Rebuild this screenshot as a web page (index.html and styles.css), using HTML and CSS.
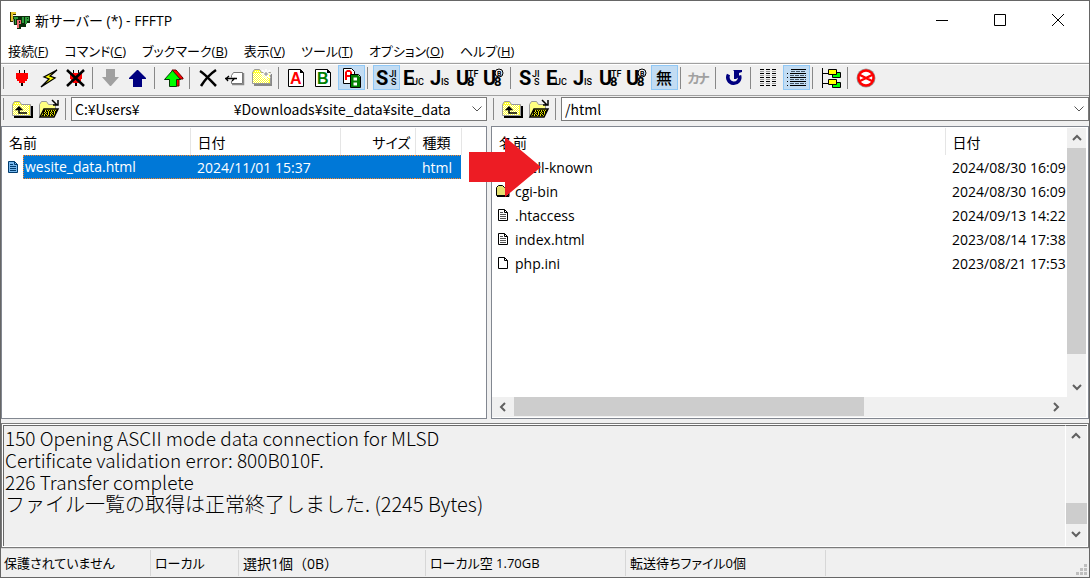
FILE: index.html
```html
<!DOCTYPE html>
<html lang="ja">
<head>
<meta charset="utf-8">
<meta name="viewport" content="width=device-width, initial-scale=1">
<title>新サーバー (*) - FFFTP</title>
<link rel="stylesheet" href="styles.css">
</head>
<body>
<svg class="defs" aria-hidden="true">
  <defs>
    <symbol id="plug" viewBox="0 0 27 25"><path d="M10 5h1v3h-1zM15 5h1v3h-1zM12 18h2v3h-2z" fill="#000"/><path d="M7 8h12v6h-1v2h-2v2h-6v-2h-2v-2h-1z" fill="#f00"/></symbol>
    <symbol id="folder-body" viewBox="0 0 27 25"><path d="M3.500 18.500v-11l2-3h5l2 3h9v11z" fill="#ffff2a" stroke="#999"/><path d="M5 8.500h16M5 10.500h16M5 12.500h16M5 14.500h16M5 16.500h16M6 6.500h5" stroke="#fff" stroke-dasharray="1 1"/><path d="M4 9.500h16M4 11.500h16M4 13.500h16M4 15.500h16M4 17.500h16" stroke="#fff" stroke-dasharray="1 1"/></symbol>
    <symbol id="up-folder" viewBox="0 0 27 25"><path d="M5 20h18V9" fill="none" stroke="#000" stroke-width="2"/><use href="#folder-body"/><path d="M10 11v5h8M7.500 12.500l2.500-2.500 2.500 2.500z" fill="none" stroke="#000" stroke-width="1.500"/></symbol>
    <symbol id="open-folder" viewBox="0 0 27 25"><path d="M3.500 19.500v-12l2-3h5l2 3h7v5" fill="#ffff80" stroke="#999"/><path d="M4 20l4-8h14l-4 8z" fill="#e0e000" stroke="#000" stroke-width="1.500"/><path d="M8 13.500h13M7 15.500h13M7 17.500h12" stroke="#000" stroke-dasharray="1 1"/><path d="M7 14.500h13M7 16.500h13M6 18.500h12" stroke="#000" stroke-dasharray="2 1"/><path d="M16 3l5 5M17 8h5V3" fill="none" stroke="#000" stroke-width="1.500"/></symbol>
    <symbol id="chev-up" viewBox="0 0 10 10"><path d="M1 7l4-4 4 4" fill="none" stroke="#606060" stroke-width="2"/></symbol>
    <symbol id="chev-down" viewBox="0 0 10 10"><path d="M1 3l4 4 4-4" fill="none" stroke="#606060" stroke-width="2"/></symbol>
    <symbol id="chev-left" viewBox="0 0 10 10"><path d="M7 1L3 5l4 4" fill="none" stroke="#606060" stroke-width="2"/></symbol>
    <symbol id="chev-right" viewBox="0 0 10 10"><path d="M3 1l4 4-4 4" fill="none" stroke="#606060" stroke-width="2"/></symbol>
    <symbol id="page" viewBox="0 0 12 12"><path d="M1.500.5h6l3 3v8h-9z" fill="#fff" stroke="#000"/><path d="M7.500.5v3h3" fill="none" stroke="#000"/></symbol>
    <symbol id="page-text" viewBox="0 0 12 12"><use href="#page"/><path d="M3 3.500h3M3 5.500h6M3 7.500h6M3 9.500h6" stroke="#555"/></symbol>
    <symbol id="page-selected" viewBox="0 0 12 12"><path d="M1.500.5h6l3 3v8h-9z" fill="#78b8ee" stroke="#003c6e"/><path d="M7.500.5v3h3M3 3.500h3M3 5.500h6M3 7.500h6M3 9.500h6" fill="none" stroke="#003c6e"/></symbol>
    <symbol id="folder" viewBox="0 0 14 12"><path d="M.5 10.500v-8l2-2h4l2 2h4v8z" fill="#e4e070" stroke="#000"/><path d="M13 3v8.500H1" fill="none" stroke="#000"/></symbol>
    <symbol id="sjis" viewBox="0 0 27 25"><text x="3" y="20" class="g-big">S</text><text x="16" y="12" class="g-small">JI</text><text x="18" y="20" class="g-small">S</text></symbol>
    <symbol id="euc" viewBox="0 0 27 25"><text x="3" y="20" class="g-big">E</text><text x="12" y="20" class="g-small">UC</text></symbol>
    <symbol id="jis" viewBox="0 0 27 25"><text x="3" y="20" class="g-big">J</text><text x="14" y="20" class="g-small">IS</text></symbol>
    <symbol id="utf8" viewBox="0 0 27 25"><text x="2" y="20" class="g-big">U</text><text x="14" y="12" class="g-small">TF</text><text x="13" y="21" class="g-eight">8</text></symbol>
    <symbol id="utf8b" viewBox="0 0 27 25"><text x="2" y="20" class="g-big">U</text><circle cx="18" cy="8" r="4" fill="none" stroke="#000"/><text x="16" y="11" class="g-bom">B</text><text x="13" y="21" class="g-eight">8</text></symbol>
  </defs>
</svg>

<main class="window">
  <header class="titlebar">
    <svg class="app-icon" viewBox="0 0 20 18" aria-hidden="true">
      <path d="M0 1h6v3H3v1h3v3H3v3H0z" fill="#332b00"/><path d="M1 1h5v2H3v2h2v2H3v3H1z" fill="#e5c62b"/>
      <path d="M3 5h17v7h-4v4h-5v2H7v-4H4z" fill="#0b2d0b"/>
      <path d="M4 6h4v2H6v5H5V8H4zM12 6h2v6h-2zM15 6h4v4h-2v3h-2z" fill="#2e9c3c"/>
      <path d="M7 9h4v4H9v4H7z" fill="#ee6b72"/><path d="M9 10h1v2H9zM17 7h1v1h-1z" fill="#102010"/>
    </svg>
    <h1 class="title">新サーバー (*) - FFFTP</h1>
    <div class="window-buttons">
      <button class="win-btn" type="button" aria-label="最小化"><svg viewBox="0 0 12 12"><path d="M0 6.500h12" stroke="#000"/></svg></button>
      <button class="win-btn" type="button" aria-label="最大化"><svg viewBox="0 0 12 12"><path d="M.5.5h11v11H.5z" fill="none" stroke="#000"/></svg></button>
      <button class="win-btn" type="button" aria-label="閉じる"><svg viewBox="0 0 12 12"><path d="M0 0l12 12M12 0L0 12" stroke="#000"/></svg></button>
    </div>
  </header>

  <nav class="menubar">
    <button type="button">接続(<u>F</u>)</button>
    <button type="button">コマンド(<u>C</u>)</button>
    <button type="button">ブックマーク(<u>B</u>)</button>
    <button type="button">表示(<u>V</u>)</button>
    <button type="button">ツール(<u>T</u>)</button>
    <button type="button">オプション(<u>O</u>)</button>
    <button type="button">ヘルプ(<u>H</u>)</button>
  </nav>

  <div class="toolbar" role="toolbar" aria-label="メインツールバー">
    <span class="sep"></span>
    <button class="tool" type="button" aria-label="接続"><svg><use href="#plug"/></svg></button>
    <button class="tool" type="button" aria-label="クイック接続"><svg viewBox="0 0 27 25"><path d="M21 5L8 12l5 2-8 8 14-9-5-2z" fill="#ff0" stroke="#000" stroke-width="1.300"/></svg></button>
    <button class="tool" type="button" aria-label="切断"><svg viewBox="0 0 27 25"><use href="#plug"/><path d="M4 5l17 16M21 5L4 21" stroke="#000" stroke-width="2.500"/></svg></button>
    <span class="sep"></span>
    <button class="tool" type="button" aria-label="ダウンロード"><svg viewBox="0 0 27 25"><path d="M8 4h9v8h4l-8 9h-1l-8-9h4z" fill="#a0a0a0"/></svg></button>
    <button class="tool" type="button" aria-label="アップロード"><svg viewBox="0 0 27 25"><path d="M8 22h9v-8h4v-1l-8-8h-1l-8 8v1h4z" fill="#000080"/></svg></button>
    <span class="sep"></span>
    <button class="tool" type="button" aria-label="ミラーリングアップロード"><svg viewBox="0 0 27 25"><path d="M12 5h4l7 8v1h-4v7h-3z" fill="#f00" stroke="#600"/><path d="M9.500 21.500v-7h-5l8-9 8 9h-4v7z" fill="#0f0" stroke="#063806"/></svg></button>
    <span class="sep"></span>
    <button class="tool" type="button" aria-label="削除"><svg viewBox="0 0 27 25"><path d="M5 6c5 3 10 9 16 15M21 5C15 9 11 13 6 21" fill="none" stroke="#000" stroke-width="2.500"/></svg></button>
    <button class="tool" type="button" aria-label="名前変更"><svg viewBox="0 0 27 25"><path d="M10 19.500h11.500V8" fill="none" stroke="#888" stroke-width="1.500"/><path d="M9.500 16v2.500h11v-11h-9l-2 3v2" fill="#fff" stroke="#777"/><path d="M3 13.500h12M7 11l-3 2.500 2 2.500M10 16l3-3" fill="none" stroke="#000" stroke-width="1.300"/></svg></button>
    <button class="tool" type="button" aria-label="フォルダ作成"><svg viewBox="0 0 27 25"><path d="M5 20h17V9" fill="none" stroke="#888" stroke-width="2"/><use href="#folder-body"/><path d="M17 4v10M12 9h10M13 5l8 8M21 5l-8 8" stroke="#fff" stroke-width="1.500"/><path d="M15 9h4M17 7v4" stroke="#888"/></svg></button>
    <span class="sep"></span>
    <button class="tool" type="button" aria-label="ASCIIモード"><svg viewBox="0 0 27 25"><path d="M4.500 4.500h12l3 3v14h-15z" fill="#fff" stroke="#000"/><path d="M16 4v4h4z" fill="#000"/><text x="6" y="19" class="g-mode g-red">A</text></svg></button>
    <button class="tool" type="button" aria-label="バイナリモード"><svg viewBox="0 0 27 25"><path d="M4.500 4.500h12l3 3v14h-15z" fill="#fff" stroke="#000"/><path d="M16 4v4h4z" fill="#000"/><text x="6" y="19" class="g-mode g-green">B</text></svg></button>
    <button class="tool pressed" type="button" aria-label="自動切替" aria-pressed="true"><svg viewBox="0 0 27 25"><path d="M5.500 3.500h8l3 3v12h-11z" fill="#fff" stroke="#000"/><path d="M7 15V7l2-2h3l2 2v8h-2v-3H9v3zM9 7v3h3V7z" fill="#f00" fill-rule="evenodd"/><path d="M12.500 9.500h8l2 2v11h-10z" fill="#fff" stroke="#000"/><path d="M13 10h7l2 2v10h-9zM15.500 12.500v3h3.500v-3zM15.500 17.500v3h3.500v-3z" fill="#008000" fill-rule="evenodd"/></svg></button>
    <span class="sep"></span>
    <button class="tool pressed" type="button" aria-label="Shift JIS" aria-pressed="true"><svg><use href="#sjis"/></svg></button>
    <button class="tool" type="button" aria-label="EUC"><svg><use href="#euc"/></svg></button>
    <button class="tool" type="button" aria-label="JIS"><svg><use href="#jis"/></svg></button>
    <button class="tool" type="button" aria-label="UTF-8"><svg><use href="#utf8"/></svg></button>
    <button class="tool" type="button" aria-label="UTF-8 BOM"><svg><use href="#utf8b"/></svg></button>
    <span class="sep"></span>
    <button class="tool" type="button" aria-label="ローカル Shift JIS"><svg><use href="#sjis"/></svg></button>
    <button class="tool" type="button" aria-label="ローカル EUC"><svg><use href="#euc"/></svg></button>
    <button class="tool" type="button" aria-label="ローカル JIS"><svg><use href="#jis"/></svg></button>
    <button class="tool" type="button" aria-label="ローカル UTF-8"><svg><use href="#utf8"/></svg></button>
    <button class="tool" type="button" aria-label="ローカル UTF-8 BOM"><svg><use href="#utf8b"/></svg></button>
    <button class="tool pressed" type="button" aria-label="無変換" aria-pressed="true"><svg viewBox="0 0 27 25"><text x="5" y="19" class="g-kanji">無</text></svg></button>
    <span class="sep"></span>
    <button class="tool" type="button" aria-label="カナ変換"><svg viewBox="0 0 27 25"><text x="1" y="18" class="g-kana">カ</text><text x="11" y="18" class="g-kana">ナ</text></svg></button>
    <span class="sep"></span>
    <button class="tool" type="button" aria-label="更新"><svg viewBox="0 0 27 25"><path d="M7.500 9.500a6 6 0 1 0 11 1" fill="none" stroke="#000080" stroke-width="3.500"/><path d="M12 5h9v2l-3 1v4l-3 2h-2v-8z" fill="#000080"/></svg></button>
    <span class="sep"></span>
    <button class="tool" type="button" aria-label="一覧"><svg viewBox="0 0 27 25"><path d="M4 4.500h16M4 8.500h16M4 12.500h16M4 16.500h16M4 20.500h16" stroke="#000" stroke-dasharray="4 2"/><path d="M4 6.500h16M4 10.500h16M4 14.500h16M4 18.500h16" stroke="#999" stroke-dasharray="4 2"/></svg></button>
    <button class="tool pressed" type="button" aria-label="詳細" aria-pressed="true"><svg viewBox="0 0 27 25"><path d="M8 4.500h15M4 8.500h1M7 8.500h16M4 12.500h1M7 12.500h16M4 16.500h1M7 16.500h16M4 20.500h1M7 20.500h16" stroke="#000"/><path d="M8 6.500h15M7 10.500h16M7 14.500h16M7 18.500h16" stroke="#456" stroke-dasharray="4 1"/></svg></button>
    <span class="sep"></span>
    <button class="tool" type="button" aria-label="同期"><svg viewBox="0 0 27 25"><path d="M4.500 3v20M5 8.500h5M5 18.500h5" fill="none" stroke="#000"/><path d="M14.500 7.500h8v5h-8zM14.500 17.500h8v5h-8z" fill="#0f0" stroke="#000"/><path d="M10.500 4.500h8v5h-8zM10.500 14.500h8v5h-8z" fill="#ff0" stroke="#000"/></svg></button>
    <span class="sep"></span>
    <button class="tool" type="button" aria-label="中止"><svg viewBox="0 0 27 25"><circle cx="13" cy="13" r="9.500" fill="#999"/><circle cx="13" cy="13" r="7.500" fill="#fff" stroke="#f00" stroke-width="2.500"/><path d="M7 10l12 6M19 10L7 16" stroke="#f00" stroke-width="2.500"/></svg></button>
  </div>

  <div class="paths">
    <div class="path-bar">
      <span class="sep"></span>
      <button class="tool" type="button" aria-label="上のフォルダへ"><svg><use href="#up-folder"/></svg></button>
      <button class="tool" type="button" aria-label="フォルダを開く"><svg><use href="#open-folder"/></svg></button>
      <span class="sep"></span>
      <div class="combo">
        <select aria-label="ローカルフォルダ"><option>C:¥Users¥&nbsp;&nbsp;&nbsp;&nbsp;&nbsp;&nbsp;&nbsp;&nbsp;&nbsp;&nbsp;&nbsp;&nbsp;&nbsp;&nbsp;&nbsp;&nbsp;&nbsp;&nbsp;&nbsp;&nbsp;&nbsp;&nbsp;&nbsp;&nbsp;&nbsp;&nbsp;&nbsp;&nbsp;&nbsp;&nbsp;¥Downloads¥site_data¥site_data</option></select>
        <svg class="combo-arrow" viewBox="0 0 10 6" aria-hidden="true"><path d="M.5.5L5 5 9.500.5" fill="none" stroke="#555"/></svg>
      </div>
    </div>
    <div class="path-bar">
      <span class="sep"></span>
      <button class="tool" type="button" aria-label="上のフォルダへ"><svg><use href="#up-folder"/></svg></button>
      <button class="tool" type="button" aria-label="フォルダを開く"><svg><use href="#open-folder"/></svg></button>
      <span class="sep"></span>
      <div class="combo">
        <select aria-label="リモートフォルダ"><option>/html</option></select>
        <svg class="combo-arrow" viewBox="0 0 10 6" aria-hidden="true"><path d="M.5.5L5 5 9.500.5" fill="none" stroke="#555"/></svg>
      </div>
    </div>
  </div>

  <div class="panes">
    <section class="pane" aria-label="ローカル">
      <table class="files local">
        <colgroup><col class="c-name"><col class="c-date"><col class="c-size"><col class="c-type"></colgroup>
        <thead><tr><th>名前</th><th>日付</th><th class="num">サイズ</th><th>種類</th></tr></thead>
        <tbody>
          <tr class="selected"><td><div class="file"><svg class="file-icon"><use href="#page-selected"/></svg><span>wesite_data.html</span></div></td><td>2024/11/01 15:37</td><td></td><td>html</td></tr>
        </tbody>
      </table>
    </section>
    <section class="pane remote-pane" aria-label="リモート">
      <div class="list-view">
        <table class="files remote">
          <colgroup><col><col class="c-rdate"></colgroup>
          <thead><tr><th>名前</th><th>日付</th></tr></thead>
          <tbody>
            <tr><td><div class="file"><svg class="folder-icon"><use href="#folder"/></svg><span>.well-known</span></div></td><td>2024/08/30 16:09</td></tr>
            <tr><td><div class="file"><svg class="folder-icon"><use href="#folder"/></svg><span>cgi-bin</span></div></td><td>2024/08/30 16:09</td></tr>
            <tr><td><div class="file"><svg class="file-icon"><use href="#page-text"/></svg><span>.htaccess</span></div></td><td>2024/09/13 14:22</td></tr>
            <tr><td><div class="file"><svg class="file-icon"><use href="#page-text"/></svg><span>index.html</span></div></td><td>2023/08/14 17:38</td></tr>
            <tr><td><div class="file"><svg class="file-icon"><use href="#page"/></svg><span>php.ini</span></div></td><td>2023/08/21 17:53</td></tr>
          </tbody>
        </table>
      </div>
      <div class="vscroll">
        <button type="button" aria-label="上へ"><svg><use href="#chev-up"/></svg></button>
        <div class="track"><div class="thumb thumb-list"></div></div>
        <button type="button" aria-label="下へ"><svg><use href="#chev-down"/></svg></button>
      </div>
      <div class="hscroll">
        <button type="button" aria-label="左へ"><svg><use href="#chev-left"/></svg></button>
        <div class="track"><div class="thumb thumb-wide"></div></div>
        <button type="button" aria-label="右へ"><svg><use href="#chev-right"/></svg></button>
      </div>
      <div class="corner"></div>
      <svg class="drag-arrow" viewBox="0 0 72 60" aria-hidden="true"><path d="M0 15h36V0l36 30-36 30V45H0z" fill="#ed1c24"/></svg>
    </section>
  </div>

  <section class="log" aria-label="ログ">
    <div class="log-text" role="log">
      <p>150 Opening ASCII mode data connection for MLSD</p>
      <p>Certificate validation error: 800B010F.</p>
      <p>226 Transfer complete</p>
      <p class="log-ja">ファイル一覧の取得は正常終了しました. (2245 Bytes)</p>
    </div>
    <div class="vscroll">
      <button type="button" aria-label="上へ"><svg><use href="#chev-up"/></svg></button>
      <div class="track track-end"><div class="thumb thumb-log"></div></div>
      <button type="button" aria-label="下へ"><svg><use href="#chev-down"/></svg></button>
    </div>
  </section>

  <footer class="status">
    <span class="s-secure">保護されていません</span>
    <span class="s-host">ローカル</span>
    <span class="s-select">選択1個（0B）</span>
    <span class="s-free">ローカル空 1.70GB</span>
    <span class="s-queue">転送待ちファイル0個</span>
    <svg class="grip" viewBox="0 0 12 12" aria-hidden="true"><path d="M8 0h3v3H8zM4 4h3v3H4zM8 4h3v3H8zM0 8h3v3H0zM4 8h3v3H4zM8 8h3v3H8z" fill="#bfbfbf"/></svg>
  </footer>
</main>
</body>
</html>
```

FILE: styles.css
```css
* { box-sizing: border-box; }

body {
  margin: 0;
  font-family: "Open Sans", "Noto Sans CJK JP", sans-serif;
  font-size: 14px;
  color: #000;
}

button, select { font: inherit; color: inherit; }
svg { display: block; }
.defs { position: absolute; width: 0; height: 0; }

.window {
  display: flex;
  flex-direction: column;
  min-height: 100vh;
  border: 1px solid #666;
  background: #f0f0f0;
  overflow: hidden;
}

/* Title bar and menu */
.titlebar {
  display: flex;
  align-items: center;
  height: 38px;
  padding-left: 9px;
  background: #fff;
}
.app-icon { width: 20px; height: 18px; margin-right: 5px; }
.title {
  flex: 1;
  margin: 0;
  font-size: 14px;
  font-weight: 400;
  font-feature-settings: "palt";
}
.window-buttons { display: flex; padding-right: 2px; }
.win-btn {
  display: grid;
  place-items: center;
  width: 58px;
  height: 36px;
  padding: 0;
  border: 0;
  background: none;
}
.win-btn svg { width: 12px; height: 12px; }

.menubar {
  display: flex;
  height: 24px;
  padding-left: 6px;
  gap: 14px;
  background: #fff;
  border-bottom: 1px solid #f0f0f0;
  font-size: 13px;
}
.menubar button {
  padding: 0 1px;
  border: 0;
  background: none;
  line-height: 22px;
  white-space: nowrap;
  font-feature-settings: "palt";
}

/* Toolbars */
.toolbar {
  display: flex;
  height: 33px;
  padding-top: 1px;
  border-top: 1px solid #a0a0a0;
  border-bottom: 1px solid #a0a0a0;
  box-shadow: inset 0 1px #fff;
}
.sep {
  flex: none;
  width: 8px;
  height: 22px;
  margin-top: 2px;
  background: linear-gradient(#888, #888) 2px 0 / 1px 100% no-repeat;
}
.tool {
  flex: none;
  width: 27px;
  height: 25px;
  padding: 0;
  border: 0;
  background: none;
}
.tool svg { width: 27px; height: 25px; }
.pressed { background: #c2dcf3; box-shadow: inset 0 0 0 1px #90c8f6; }

.g-big { font: 700 20px "Liberation Sans Narrow", "Roboto", sans-serif; }
.g-small { font: 500 9px "Roboto", sans-serif; }
.g-eight { font: 700 13px "Roboto", sans-serif; }
.g-bom { font: 700 7px "Roboto", sans-serif; }
.g-mode { font: 700 16px "Liberation Sans", sans-serif; }
.g-kanji { font: 500 16px "Noto Sans CJK JP", sans-serif; }
.g-kana { font: 700 13px "Noto Sans CJK JP", sans-serif; fill: #a0a0a0; }
.g-red { fill: #f00; }
.g-green { fill: #008000; }

.paths, .panes {
  display: grid;
  grid-template-columns: minmax(0, 486fr) minmax(0, 598fr);
  column-gap: 4px;
}
.path-bar { display: flex; height: 30px; padding-top: 1px; }
.path-bar .sep { margin-top: 1px; }
.combo { position: relative; flex: 1; min-width: 0; height: 24px; }
.combo select {
  width: 100%;
  height: 24px;
  padding: 0 22px 0 3px;
  border: 1px solid #7a7a7a;
  border-radius: 0;
  background: #fff;
  appearance: none;
  font-family: "Noto Sans CJK JP", sans-serif;
  font-size: 14px;
  font-weight: 400;
}
.combo-arrow {
  position: absolute;
  right: 5px;
  top: 9px;
  width: 10px;
  height: 6px;
  pointer-events: none;
}

/* File lists */
.panes { flex: 1; }
.pane {
  min-height: 180px;
  padding: 1px 1px 1px 0;
  border: 1px solid #828790;
  background: #fff;
}
.remote-pane {
  position: relative;
  display: grid;
  grid-template-columns: minmax(0, 1fr) 20px;
  grid-template-rows: 1fr 20px;
}
.list-view { min-width: 0; overflow: hidden; }
.files { border-collapse: collapse; table-layout: fixed; }
.local { width: 459px; }
.remote { width: 100%; }
.c-name { width: 188px; }
.c-date { width: 150px; }
.c-size { width: 75px; }
.c-type { width: 46px; }
.c-rdate { width: 122px; }
.files th, .files td {
  padding: 0 7px;
  text-align: left;
  font-weight: 400;
  white-space: nowrap;
}
.files th {
  height: 27px;
  padding-top: 1px;
  border-right: 1px solid #e5e5e5;
  font-feature-settings: "palt";
}
.remote th:last-child { border-right: 0; }
.files td { height: 24px; }
.files td:first-child { padding: 0; }
.files .num { padding-right: 4px; text-align: right; }
.files td:last-child { padding-right: 0; }
.file { display: flex; align-items: center; height: 24px; }
.file-icon { flex: none; width: 12px; height: 12px; margin: 0 4px 0 5px; }
.folder-icon { flex: none; width: 14px; height: 12px; margin: 0 3px 0 4px; }
.file span { flex: 1; }
.remote .file { gap: 2px; }
.selected td { background: #0078d7; color: #fff; }
.selected td:first-child { background: #fff; }
.selected .file span {
  height: 24px;
  padding-left: 1px;
  line-height: 22px;
  background: #0078d7;
  border: 1px dotted #ff8728;
  border-right: 0;
}
.selected td + td {
  background:
    repeating-linear-gradient(90deg, #ff8728 0 1px, #0078d7 1px 2px) 0 0 / 100% 1px no-repeat,
    repeating-linear-gradient(90deg, #ff8728 0 1px, #0078d7 1px 2px) 0 100% / 100% 1px no-repeat,
    #0078d7;
}

.drag-arrow {
  position: absolute;
  left: -23px;
  top: 10px;
  width: 72px;
  height: 60px;
}

/* Scroll bars */
.vscroll, .hscroll { display: flex; background: #f0f0f0; }
.vscroll { flex-direction: column; width: 19px; }
.vscroll button, .hscroll button {
  display: grid;
  flex: none;
  place-items: center;
  width: 19px;
  height: 20px;
  padding: 0;
  border: 0;
  background: none;
}
.vscroll button svg, .hscroll button svg { width: 10px; height: 10px; }
.hscroll button { width: 22px; }
.track { flex: 1; }
.track-end { display: flex; flex-direction: column; justify-content: flex-end; }
.thumb { background: #cdcdcd; }
.thumb-list { height: 90%; }
.thumb-wide { width: 66%; height: 19px; }
.thumb-log { height: 21px; }
.corner { width: 19px; background: #f0f0f0; }

/* Log */
.log {
  display: flex;
  height: 125px;
  margin-top: 4px;
  padding: 1px;
  border: 1px solid #7a7a7a;
  background: #fff;
}
.log-text {
  flex: 1;
  min-width: 0;
  padding: 1px 0 0 1px;
  border-top: 1px solid #696969;
  border-left: 1px solid #696969;
  background: #f0f0f0;
  font-family: "Noto Sans CJK JP", sans-serif;
  font-size: 19px;
  font-weight: 300;
  line-height: 22px;
  white-space: nowrap;
}
.log-text p { margin: 0; }
.log-text .log-ja { font-size: 20px; }
.log .vscroll {
  width: 22px;
  padding-bottom: 2px;
  border-left: 1px solid #fff;
  border-top: 1px solid #696969;
}

/* Status bar */
.status {
  display: flex;
  align-items: center;
  height: 29px;
  border-top: 1px solid #d7d7d7;
  font-size: 13px;
  font-feature-settings: "palt";
}
.status span {
  height: 26px;
  padding-left: 4px;
  border-right: 1px solid #d7d7d7;
  line-height: 27px;
  white-space: nowrap;
}
.status .s-secure { width: 150px; padding-left: 3px; }
.s-host { width: 88px; }
.status .s-select { width: 187px; font-size: 14px; font-feature-settings: normal; }
.s-free, .s-queue { width: 200px; }
.grip { align-self: flex-end; width: 12px; height: 12px; margin: 0 1px 1px auto; }
```
